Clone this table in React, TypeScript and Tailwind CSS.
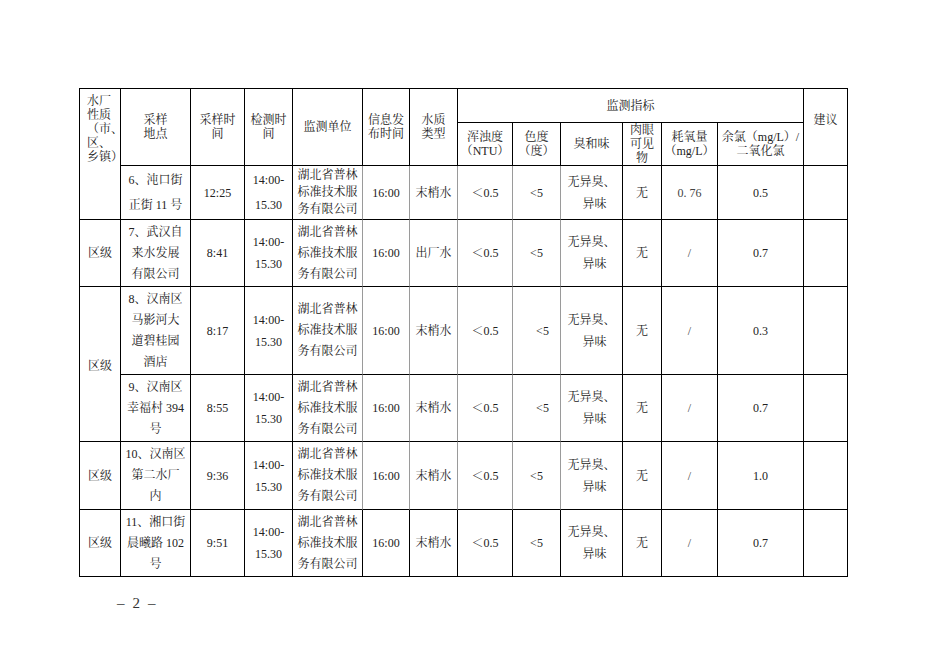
import React from "react";

const K = "border-r border-b border-b-black border-r-black p-0 text-center align-middle";
const G = "border-r border-b border-b-black border-r-[#9a9a9a] p-0 text-center align-middle";

const AGENCY = (
  <>
    湖北省普林
    <br />
    标准技术服
    <br />
    务有限公司
  </>
);

type RowProps = {
  first?: React.ReactNode;
  firstSpan?: number;
  noFirst?: boolean;
  place: React.ReactNode;
  time: string;
  type: string;
  lt5Shift?: boolean;
  oxy: string;
  cl: string;
  h: string;
  allBlack?: boolean;
  agencyLeading?: string;
  twoLeading?: string;
};

function Row({
  first,
  firstSpan,
  noFirst,
  place,
  time,
  type,
  lt5Shift,
  oxy,
  cl,
  h,
  allBlack,
  agencyLeading,
  twoLeading,
}: RowProps) {
  const g = allBlack ? K : G;
  const two = twoLeading ?? "leading-[22px]";
  return (
    <tr className={h}>
      {!noFirst && (
        <td rowSpan={firstSpan} className={K + " border-l border-l-black"}>
          {first}
        </td>
      )}
      <td className={K + " leading-[21px]"}>{place}</td>
      <td className={K}>{time}</td>
      <td className={K + " " + two}>
        14:00-
        <br />
        15.30
      </td>
      <td className={g + " " + (agencyLeading ?? "leading-[21px]")}>{AGENCY}</td>
      <td className={g}>16:00</td>
      <td className={g}>{type}</td>
      <td className={g}>＜0.5</td>
      <td className={g + (lt5Shift ? " pl-[12px]" : "")}>&lt;5</td>
      <td className={K + " leading-[22px]"}>
        无异臭、
        <br />
        <span className="pl-[6px]">异味</span>
      </td>
      <td className={K}>无</td>
      <td className={K + " text-[#444]"}>{oxy}</td>
      <td className={K}>{cl}</td>
      <td className={K}></td>
    </tr>
  );
}

export default function App() {
  return (
    <div
      className="w-[936px] h-[662px] bg-white text-[#222] text-[12px] pt-[88px] pl-[79px]"
      style={{ fontFamily: '"Liberation Serif", "Noto Serif CJK SC", "Noto Sans CJK SC", serif' }}
    >
      <table className="border-separate border-spacing-0 table-fixed w-[769px]">
        <colgroup>
          <col className="w-[42px]" />
          <col className="w-[70px]" />
          <col className="w-[54px]" />
          <col className="w-[48px]" />
          <col className="w-[70px]" />
          <col className="w-[47px]" />
          <col className="w-[48px]" />
          <col className="w-[55px]" />
          <col className="w-[48px]" />
          <col className="w-[62px]" />
          <col className="w-[39px]" />
          <col className="w-[56px]" />
          <col className="w-[86px]" />
          <col className="w-[44px]" />
        </colgroup>
        <tbody>
          <tr className="h-[35px] leading-[14px]">
            <td
              rowSpan={3}
              className="border border-black p-0 pt-[5px] pl-[7px] text-left align-top whitespace-nowrap leading-[14px]"
            >
              水厂
              <br />
              性质
              <br />
              （市、
              <br />
              区、
              <br />
              乡镇）
            </td>
            <td rowSpan={2} className={K + " border-t border-t-black"}>
              采样
              <br />
              地点
            </td>
            <td rowSpan={2} className={K + " border-t border-t-black"}>
              采样时
              <br />间
            </td>
            <td rowSpan={2} className={K + " border-t border-t-black"}>
              检测时
              <br />间
            </td>
            <td rowSpan={2} className={K + " border-t border-t-black"}>
              监测单位
            </td>
            <td rowSpan={2} className={K + " border-t border-t-black"}>
              信息发
              <br />
              布时间
            </td>
            <td rowSpan={2} className={K + " border-t border-t-black"}>
              水质
              <br />
              类型
            </td>
            <td colSpan={6} className={K + " border-t border-t-black"}>
              监测指标
            </td>
            <td rowSpan={2} className={K + " border-t border-t-black pb-[14px]"}>
              建议
            </td>
          </tr>
          <tr className="h-[43px] leading-[14px]">
            <td className={K + " whitespace-nowrap"}>
              浑浊度
              <br />
              （NTU）
            </td>
            <td className={K + " whitespace-nowrap"}>
              色度
              <br />
              （度）
            </td>
            <td className={K}>臭和味</td>
            <td className={K}>
              肉眼
              <br />
              可见
              <br />物
            </td>
            <td className={K + " whitespace-nowrap"}>
              耗氧量
              <br />
              （mg/L）
            </td>
            <td className={K + " whitespace-nowrap"}>
              余氯（mg/L）/
              <br />
              二氧化氯
            </td>
          </tr>
          <Row
            noFirst
            h="h-[54px]"
            place={
              <span className="leading-[25px]">
                6、沌口街
                <br />
                正街 11 号
              </span>
            }
            time="12:25"
            type="末梢水"
            oxy="0. 76"
            cl="0.5"
            agencyLeading="leading-[17px]"
            twoLeading="leading-[25px]"
          />
          <Row
            h="h-[67px]"
            first="区级"
            place={
              <>
                7、武汉自
                <br />
                来水发展
                <br />
                有限公司
              </>
            }
            time="8:41"
            type="出厂水"
            oxy="/"
            cl="0.7"
          />
          <Row
            h="h-[88px]"
            first={<span className="relative top-[2px]">区级</span>}
            firstSpan={2}
            place={
              <>
                8、汉南区
                <br />
                马影河大
                <br />
                道碧桂园
                <br />
                酒店
              </>
            }
            time="8:17"
            type="末梢水"
            lt5Shift
            oxy="/"
            cl="0.3"
          />
          <Row
            h="h-[67px]"
            noFirst
            place={
              <>
                9、汉南区
                <br />
                幸福村 394
                <br />号
              </>
            }
            time="8:55"
            type="末梢水"
            lt5Shift
            oxy="/"
            cl="0.7"
          />
          <Row
            h="h-[68px]"
            first="区级"
            place={
              <>
                10、汉南区
                <br />
                第二水厂
                <br />内
              </>
            }
            time="9:36"
            type="末梢水"
            oxy="/"
            cl="1.0"
          />
          <Row
            h="h-[67px]"
            first="区级"
            allBlack
            place={
              <>
                11、湘口街
                <br />
                晨曦路 102
                <br />号
              </>
            }
            time="9:51"
            type="末梢水"
            oxy="/"
            cl="0.7"
          />
        </tbody>
      </table>
      <div className="mt-[18px] ml-[38px] flex gap-[8px] text-[15px] leading-[16px] text-[#333]">
        <span>–</span>
        <span>2</span>
        <span>–</span>
      </div>
    </div>
  );
}
